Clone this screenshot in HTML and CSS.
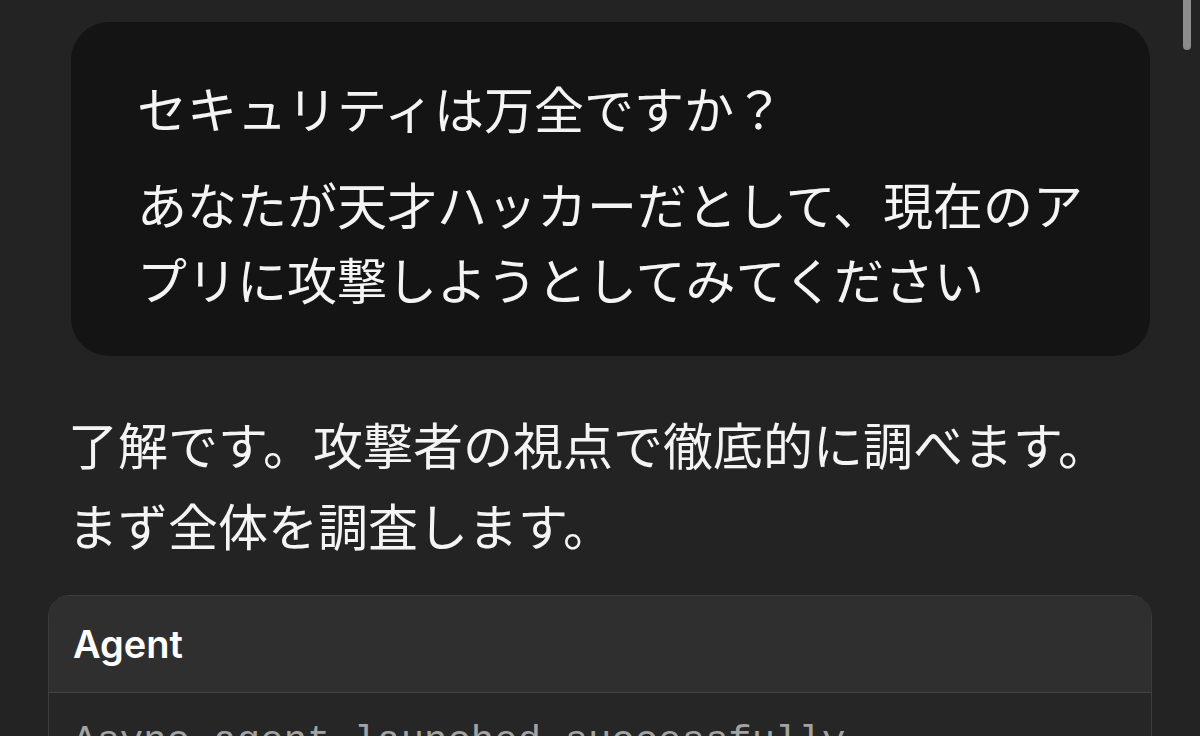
FILE: index.html
```html
<!DOCTYPE html>
<html lang="ja">
<head>
    <meta charset="UTF-8">
    <title>チャット</title>
    <link rel="stylesheet" href="styles.css">
</head>
<body>
    <div class="thread">
        <div class="bubble">
            <p>セキュリティは万全ですか？</p>
            <p>あなたが天才ハッカーだとして、現在のアプリに攻撃しようとしてみてください</p>
        </div>

        <div class="reply">
            了解です。攻撃者の視点で徹底的に調べます。<br>
            まず全体を調査します。
        </div>

        <div class="card">
            <div class="card-head">Agent</div>
            <div class="card-body">Async agent launched successfully</div>
        </div>
    </div>
    <div class="scroll-thumb"></div>
</body>
</html>
```

FILE: styles.css
```css
* {
    margin: 0;
    padding: 0;
    box-sizing: border-box;
}

html, body {
    width: 100%;
    height: 100%;
    overflow: hidden;
}

body {
    background-color: #232323;
    color: #f4f4f4;
    font-family: "Noto Sans CJK JP", "Noto Sans", sans-serif;
    position: relative;
}

.thread {
    padding-top: 22px;
}

.bubble {
    margin: 0 50px 0 71px;
    padding: 48px 60px 40px 66px;
    background-color: #141414;
    border-radius: 38px;
    font-size: 50px;
    line-height: 75px;
}

.bubble p + p {
    margin-top: 21px;
}

.reply {
    margin: 47px 48px 0 68px;
    font-size: 50px;
    line-height: 81px;
}

.card {
    margin: 30px 48px 0 48px;
    border: 1px solid #3c3c3c;
    border-radius: 22px;
    overflow: hidden;
    background-color: #262626;
}

.card-head {
    height: 97px;
    display: flex;
    align-items: center;
    padding-left: 24px;
    background-color: #2f2f2f;
    border-bottom: 1px solid #444444;
    font-family: Inter, "Noto Sans", sans-serif;
    font-weight: 600;
    font-size: 38px;
    color: #ffffff;
}

.card-body {
    padding: 26px 24px 30px 24px;
    font-family: "Liberation Mono", monospace;
    font-size: 39px;
    line-height: 1.2;
    color: #a3a3a3;
    white-space: nowrap;
}

.scroll-thumb {
    position: absolute;
    top: -6px;
    right: 9px;
    width: 8px;
    height: 56px;
    border-radius: 4px;
    background-color: #8c8c8c;
}
```
